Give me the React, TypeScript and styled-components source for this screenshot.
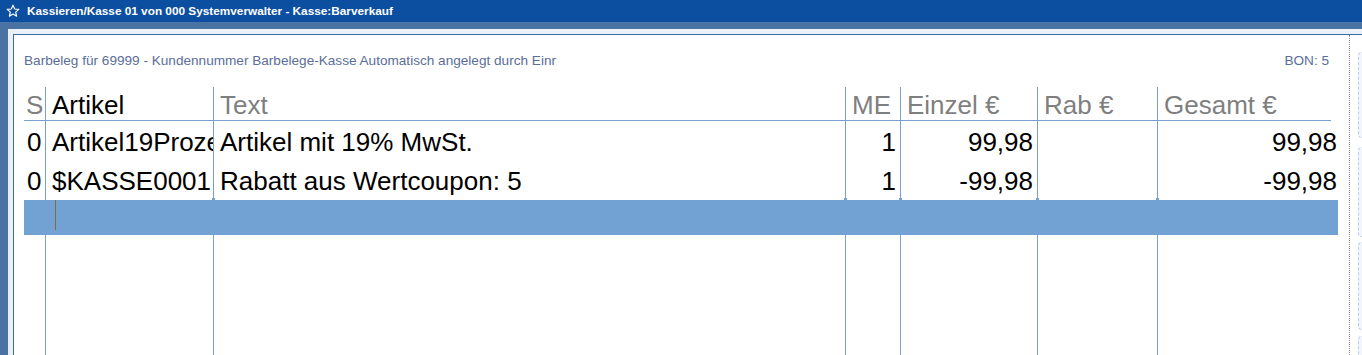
import React from 'react';
import styled, { createGlobalStyle, css } from 'styled-components';

const Global = createGlobalStyle`
  html, body { margin: 0; padding: 0; background: #4a73a3; overflow: hidden; }
  body { font-family: "Liberation Sans", Arial, sans-serif; }
  * { box-sizing: border-box; }
`;

const LINE = '#79a0d3';
const COLS = '21px 168px 632px 55px 137px 120px 181px';
const HEAD_COLS = '21px 168px 632px 55px 137px 120px 174px';

const Window = styled.div`
  width: 1362px;
  height: 355px;
  display: flex;
  flex-direction: column;
  overflow: hidden;
`;

const TitleBar = styled.div`
  height: 22px;
  flex: none;
  background: #0c4fa1;
  display: flex;
  align-items: center;
  gap: 7px;
  padding-left: 6px;
  color: #fff;
  font-weight: bold;
  font-size: 11.8px;
`;

const Workspace = styled.div`
  flex: 1;
  min-height: 0;
  background: #4a73a3;
  padding: 7px 0 0 8px;
  display: flex;
`;

const Frame = styled.div`
  flex: 1;
  min-width: 0;
  background: #eaf0f8;
  padding: 5px 0 0 5px;
  display: flex;
`;

const Panel = styled.div`
  flex: 1;
  min-width: 0;
  background: #fff;
  border-top: 1px solid #3d6aa2;
  border-left: 1px solid #3d6aa2;
  display: flex;
`;

const Main = styled.div`
  width: 1335px;
  flex: none;
  padding: 18px 10px 0 10px;
  display: flex;
  flex-direction: column;
`;

const SubRow = styled.div`
  display: flex;
  justify-content: space-between;
  padding-right: 10px;
  font-size: 13.6px;
  line-height: 16px;
  color: #5b6e99;
  margin-bottom: 18px;
`;

const Table = styled.div`
  flex: 1;
  display: flex;
  flex-direction: column;
  width: 1314px;
`;

const HeaderRow = styled.div`
  display: grid;
  grid-template-columns: ${HEAD_COLS};
  width: 1307px;
  height: 34px;
  border-bottom: 1px solid ${LINE};
`;

const HeadCell = styled.div<{ $first?: boolean; $active?: boolean }>`
  font-size: 26px;
  line-height: 30px;
  padding: 3px 0 0 ${(p) => (p.$first ? '2px' : '6px')};
  color: ${(p) => (p.$active ? '#000' : '#7f7f7f')};
  border-left: ${(p) => (p.$first ? 'none' : `1px solid ${LINE}`)};
  white-space: nowrap;
  overflow: hidden;
`;

const DataRow = styled.div<{ $h: number; $selected?: boolean }>`
  display: grid;
  grid-template-columns: ${COLS};
  height: ${(p) => p.$h}px;
  background: ${(p) => (p.$selected ? '#72a2d4' : 'transparent')};
`;

const Cell = styled.div<{
  $first?: boolean;
  $right?: boolean;
  $last?: boolean;
  $selected?: boolean;
  $bump?: boolean;
}>`
  position: relative;
  font-size: 26px;
  line-height: 36px;
  padding-top: 3px;
  padding-left: ${(p) => (p.$first ? '3px' : '6px')};
  padding-right: ${(p) => (p.$last ? '1px' : '4px')};
  text-align: ${(p) => (p.$right ? 'right' : 'left')};
  color: #000;
  white-space: nowrap;
  text-overflow: clip;
  overflow: ${(p) => (p.$selected ? 'visible' : 'hidden')};
  border-left: ${(p) =>
    p.$first ? 'none' : p.$selected ? '1px solid transparent' : `1px solid ${LINE}`};
  ${(p) =>
    p.$bump &&
    css`
      &::before {
        content: '';
        position: absolute;
        top: -2px;
        left: -2px;
        width: 3px;
        height: 2px;
        background: ${LINE};
      }
    `}
`;

const Filler = styled.div`
  flex: 1;
  display: grid;
  grid-template-columns: ${COLS};
`;

const FillCell = styled.div<{ $first?: boolean }>`
  border-left: ${(p) => (p.$first ? 'none' : `1px solid ${LINE}`)};
`;

const Caret = styled.span`
  position: absolute;
  left: 9px;
  top: 0;
  width: 1px;
  height: 30px;
  background: #8a6a3a;
`;

const Sidebar = styled.div`
  flex: 1;
  border-left: 1px dotted #8a8a8a;
  padding: 17px 0 0 8px;
  display: flex;
  flex-direction: column;
`;

const SideButton = styled.div<{ $h: number; $gap: number }>`
  height: ${(p) => p.$h}px;
  margin-bottom: ${(p) => p.$gap}px;
  flex: none;
  width: 20px;
  background: #f2f6fc;
  border: 1px dashed #b5cdee;
  border-right: none;
  border-radius: 4px 0 0 4px;
`;

const Star = () => (
  <svg width="14" height="14" viewBox="0 0 24 24" fill="none" stroke="#fff" strokeWidth="2" strokeLinejoin="round">
    <polygon points="12,2 14.9,8.6 22,9.3 16.6,14 18.2,21 12,17.3 5.8,21 7.4,14 2,9.3 9.1,8.6" />
  </svg>
);

type Row = { s: string; art: string; text: string; me: string; einzel: string; rab: string; gesamt: string };

const rows: Row[] = [
  { s: '0', art: 'Artikel19Prozent', text: 'Artikel mit 19% MwSt.', me: '1', einzel: '99,98', rab: '', gesamt: '99,98' },
  { s: '0', art: '$KASSE0001', text: 'Rabatt aus Wertcoupon: 5', me: '1', einzel: '-99,98', rab: '', gesamt: '-99,98' },
];

const headers = ['S', 'Artikel', 'Text', 'ME', 'Einzel €', 'Rab €', 'Gesamt €'];

export default function App() {
  return (
    <Window>
      <Global />
      <TitleBar>
        <Star />
        <span>Kassieren/Kasse 01 von 000 Systemverwalter - Kasse:Barverkauf</span>
      </TitleBar>
      <Workspace>
        <Frame>
          <Panel>
            <Main>
              <SubRow>
                <span>Barbeleg für 69999 - Kundennummer Barbelege-Kasse Automatisch angelegt durch Einr</span>
                <span>BON: 5</span>
              </SubRow>
              <Table>
                <HeaderRow>
                  {headers.map((h, i) => (
                    <HeadCell key={h} $first={i === 0} $active={i === 1}>
                      {h}
                    </HeadCell>
                  ))}
                </HeaderRow>
                {rows.map((r, idx) => (
                  <DataRow key={idx} $h={idx === 0 ? 39 : 40}>
                    <Cell $first>{r.s}</Cell>
                    <Cell>{r.art}</Cell>
                    <Cell>{r.text}</Cell>
                    <Cell $right>{r.me}</Cell>
                    <Cell $right>{r.einzel}</Cell>
                    <Cell $right>{r.rab}</Cell>
                    <Cell $right $last>
                      {r.gesamt}
                    </Cell>
                  </DataRow>
                ))}
                <DataRow $h={35} $selected>
                  <Cell $first $selected />
                  <Cell $selected>
                    <Caret />
                  </Cell>
                  <Cell $selected $bump />
                  <Cell $selected $bump />
                  <Cell $selected $bump />
                  <Cell $selected $bump />
                  <Cell $selected $bump $last />
                </DataRow>
                <Filler>
                  {headers.map((h, i) => (
                    <FillCell key={h} $first={i === 0} />
                  ))}
                </Filler>
              </Table>
            </Main>
            <Sidebar>
              <SideButton $h={86} $gap={9} />
              <SideButton $h={90} $gap={5} />
              <SideButton $h={88} $gap={6} />
              <SideButton $h={60} $gap={0} />
            </Sidebar>
          </Panel>
        </Frame>
      </Workspace>
    </Window>
  );
}
